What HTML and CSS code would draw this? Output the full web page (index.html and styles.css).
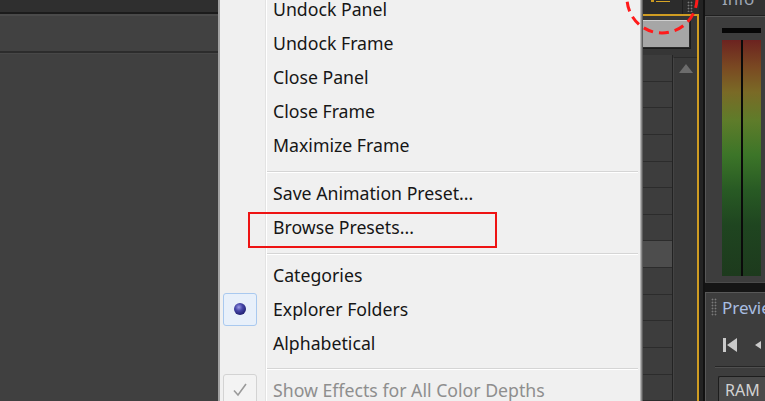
FILE: index.html
```html
<!DOCTYPE html>
<html>
<head>
<meta charset="utf-8">
<link rel="stylesheet" href="styles.css">
</head>
<body>
<div class="screen">
  <div class="left-panel">
    <div class="lp-top"></div>
    <div class="lp-bar"></div>
    <div class="lp-body"></div>
  </div>

  <div class="menu">
    <div class="menu-list">
      <div class="item"><span class="icon"></span><span class="label">Undock Panel</span></div>
      <div class="item"><span class="icon"></span><span class="label">Undock Frame</span></div>
      <div class="item"><span class="icon"></span><span class="label">Close Panel</span></div>
      <div class="item"><span class="icon"></span><span class="label">Close Frame</span></div>
      <div class="item"><span class="icon"></span><span class="label">Maximize Frame</span></div>
      <div class="sep"></div>
      <div class="item"><span class="icon"></span><span class="label">Save Animation Preset...</span></div>
      <div class="item"><span class="icon"></span><span class="label">Browse Presets...</span></div>
      <div class="sep"></div>
      <div class="item"><span class="icon"></span><span class="label">Categories</span></div>
      <div class="item"><span class="icon icon-radio"><span class="dot"></span></span><span class="label">Explorer Folders</span></div>
      <div class="item"><span class="icon"></span><span class="label">Alphabetical</span></div>
      <div class="sep sep-short"></div>
      <div class="item disabled"><span class="icon icon-check"><svg width="16" height="14" viewBox="0 0 16 14"><path d="M2 7.5 L6 12 L14 1" fill="none" stroke="#9a9a9a" stroke-width="1.6"/></svg></span><span class="label">Show Effects for All Color Depths</span></div>
    </div>
    <div class="annot-rect"></div>
  </div>

  <div class="right">
    <div class="col-a">
      <div class="a-head">
        <span class="tick"></span>
        <span class="burger"><i></i><i></i></span>
        <span class="a-div"></span>
        <span class="grip"></span>
      </div>
      <div class="a-body">
        <div class="a-btn"></div>
        <div class="a-grid">
          <div class="cells">
            <div class="cell"></div><div class="cell"></div><div class="cell"></div><div class="cell"></div>
            <div class="cell"></div><div class="cell"></div><div class="cell"></div><div class="cell hl"></div>
            <div class="cell"></div><div class="cell"></div><div class="cell"></div><div class="cell"></div>
            <div class="cell"></div><div class="cell"></div>
          </div>
          <div class="scroll"><div class="tri"></div></div>
        </div>
      </div>
    </div>
    <div class="col-sep"></div>
    <div class="col-b">
      <div class="b-head"><span class="tab">Info</span></div>
      <div class="info-panel">
        <div class="peak"></div>
        <div class="meter"><div class="ch"></div><div class="ch-div"></div><div class="ch"></div></div>
      </div>
      <div class="b-gap"></div>
      <div class="preview-panel">
        <div class="pv-head"><span class="grip grip-tall"></span><span class="pv-title">Preview</span></div>
        <div class="pv-controls">
          <span class="skip"><i class="bar"></i><i class="tri-left"></i></span>
          <span class="tri-left small"></span>
        </div>
        <div class="pv-line"></div>
        <div class="ram">RAM</div>
      </div>
    </div>
  </div>

  <svg class="annot-circle" width="90" height="90" viewBox="0 0 90 90">
    <circle cx="45" cy="45" r="35" fill="none" stroke="#ff1a1a" stroke-width="3" stroke-dasharray="10 6"/>
  </svg>
</div>
</body>
</html>
```

FILE: styles.css
```css
html, body {
  margin: 0;
  padding: 0;
}
body {
  width: 765px;
  height: 401px;
  overflow: hidden;
  background: #404040;
  font-family: "Noto Sans", "Open Sans", sans-serif;
}
.screen {
  position: relative;
  display: flex;
  width: 765px;
  height: 401px;
  overflow: hidden;
}

/* left dark panel */
.left-panel {
  width: 218px;
  flex: none;
  display: flex;
  flex-direction: column;
  background: #404040;
}
.lp-top {
  flex: none;
  height: 12px;
  background: #2f2f2f;
  border-bottom: 2px solid #1b1b1b;
}
.lp-bar {
  flex: none;
  height: 35px;
  background: #414141;
  border-top: 2px solid #4a4a4a;
  border-bottom: 2px solid #2c2c2c;
}
.lp-body {
  flex: 1;
  background: #404040;
  border-top: 1px solid #474747;
}

/* popup menu */
.menu {
  position: relative;
  z-index: 2;
  width: 420px;
  flex: none;
  height: 401px;
  overflow: hidden;
  background: #f0f0f0;
  border-left: 2px solid #a2a2a2;
  box-shadow: 1px 0 0 #b8b8b8, 2px 0 0 #8a8a8a, 3px 0 0 #5e5e5e;
}
.menu-list {
  margin-top: -8px;
  display: flex;
  flex-direction: column;
  background-image: linear-gradient(to right, transparent 45px, #e3e3e3 45px, #e3e3e3 46px, #ffffff 46px, #ffffff 47px, transparent 47px);
}
.item {
  flex: none;
  height: 34px;
  display: flex;
  align-items: center;
  padding-left: 3px;
  color: #161616;
  font-size: 17.7px;
  white-space: nowrap;
}
.item .icon {
  width: 34px;
  height: 33px;
  box-sizing: border-box;
  margin-right: 16px;
  display: flex;
  align-items: center;
  justify-content: center;
  flex: none;
}
.item.disabled {
  color: #8e8e8e;
}
.icon-radio {
  background: #e8f0fa;
  border: 1px solid #a9c9ef;
  border-radius: 3px;
}
.icon-radio .dot {
  width: 12px;
  height: 12px;
  border-radius: 50%;
  background: radial-gradient(circle at 40% 35%, #9a9ae6 0%, #4646a8 35%, #202070 75%, #15154f 100%);
}
.icon-check {
  border: 1px solid #d3d3d3;
  border-radius: 3px;
  background: #f3f3f3;
}
.sep {
  flex: none;
  height: 14px;
  box-sizing: border-box;
  display: flex;
  align-items: flex-end;
  padding: 0 2px 3px 47px;
}
.sep-short {
  height: 13px;
}
.sep::before {
  content: "";
  flex: 1;
  height: 1px;
  background: #d5d5d5;
  border-bottom: 1px solid #ffffff;
}
.annot-rect {
  position: absolute;
  left: 28px;
  top: 212px;
  width: 249px;
  height: 36px;
  box-sizing: border-box;
  border: 2px solid #ee1313;
}

/* right side */
.right {
  flex: 1;
  display: flex;
  height: 401px;
}
.col-a {
  width: 59px;
  flex: none;
  display: flex;
  flex-direction: column;
  background: #353535;
  overflow: hidden;
}
.a-head {
  flex: none;
  position: relative;
  height: 14px;
  background: #2c2c2c;
}
.a-head .tick {
  position: absolute;
  left: 11px;
  top: 0;
  width: 3px;
  height: 2px;
  background: #c9981e;
}
.a-head .burger {
  position: absolute;
  left: 16px;
  top: -3px;
  width: 14px;
  display: flex;
  flex-direction: column;
  gap: 2px;
}
.a-head .burger i {
  display: block;
  height: 1.5px;
  background: #d6a526;
}
.a-head .a-div {
  position: absolute;
  left: 42px;
  top: 0;
  width: 1px;
  height: 14px;
  background: #1e1e1e;
}
.grip {
  position: absolute;
  left: 47px;
  top: 1px;
  width: 6px;
  height: 11px;
  background-image: radial-gradient(circle, #7a7a7a 0.8px, transparent 1.1px);
  background-size: 3px 3px;
}
.a-body {
  flex: 1;
  min-height: 0;
  display: flex;
  flex-direction: column;
  border-top: 2px solid #cf9c22;
  border-right: 2px solid #cf9c22;
  background: #363636;
}
.a-btn {
  flex: none;
  margin-top: 4px;
  width: 50px;
  height: 28px;
  box-sizing: border-box;
  background: #a6a6a6;
  border: 1px solid #2a2a2a;
  border-top-color: #cfcfcf;
  border-left-color: #cfcfcf;
  box-shadow: 1px 1px 0 #1b1b1b;
}
.a-grid {
  margin-top: 7px;
  flex: 1;
  min-height: 0;
  display: flex;
  padding-left: 3px;
  overflow: hidden;
}
.cells {
  width: 29px;
  flex: none;
  display: flex;
  flex-direction: column;
  border-right: 1px solid #232323;
}
.cell {
  height: 26.65px;
  flex: none;
  box-sizing: border-box;
  background: #3d3d3d;
  border-bottom: 1px solid #2c2c2c;
}
.cell.hl {
  background: #4d4d4d;
}
.scroll {
  flex: 1;
  margin-top: 2px;
  background: #393939;
  border-top: 1px solid #2a2a2a;
  border-left: 1px solid #444;
}
.scroll .tri {
  margin: 6px auto 0;
  width: 0;
  height: 0;
  border-left: 7px solid transparent;
  border-right: 7px solid transparent;
  border-bottom: 9px solid #6c6c6c;
}
.col-sep {
  width: 6px;
  flex: none;
  background: linear-gradient(to right, #232323 0, #232323 4px, #121212 4px);
}
.col-b {
  flex: 1;
  display: flex;
  flex-direction: column;
  background: #3c3c3c;
  overflow: hidden;
}
.b-head {
  flex: none;
  height: 15px;
  background: #323232;
  border-bottom: 1px solid #1f1f1f;
  overflow: hidden;
}
.tab {
  display: block;
  margin: -11px 0 0 17px;
  font-size: 17px;
  line-height: 20px;
  color: #9ea6b4;
}
.info-panel {
  flex: none;
  height: 266px;
  box-sizing: border-box;
  background: #3d3d3d;
  border-top: 1px solid #575757;
  border-left: 1px solid #575757;
  padding: 11px 0 0 16px;
}
.peak {
  width: 39px;
  height: 5px;
  background: #070707;
}
.meter {
  margin-top: 7px;
  width: 39px;
  height: 236px;
  display: flex;
}
.meter .ch {
  flex: 1;
  background: linear-gradient(to bottom, #6c2320 0px, #7a4a22 28px, #7a6a26 52px, #5f7c2a 80px, #3c7528 115px, #285a24 150px, #1f4520 185px, #1d3a1d 236px);
}
.meter .ch-div {
  width: 2px;
  background: #0a0a0a;
}
.b-gap {
  flex: none;
  height: 10px;
  background: #151515;
  border-top: 1px solid #4b4b4b;
  box-sizing: border-box;
}
.preview-panel {
  flex: 1;
  background: #3d3d3d;
  border-top: 1px solid #585858;
  border-left: 1px solid #585858;
}
.pv-head {
  position: relative;
  height: 30px;
  display: flex;
  align-items: center;
}
.grip-tall {
  left: 5px;
  top: 5px;
  width: 6px;
  height: 18px;
}
.pv-title {
  margin-left: 16px;
  margin-top: -2px;
  font-size: 17px;
  color: #a9bee2;
  white-space: nowrap;
}
.pv-controls {
  height: 43px;
  display: flex;
  align-items: center;
  padding-left: 17px;
  gap: 18px;
}
.skip {
  display: flex;
  align-items: center;
  gap: 1px;
}
.skip .bar {
  display: block;
  width: 3px;
  height: 14px;
  background: #cacaca;
}
.tri-left {
  display: block;
  width: 0;
  height: 0;
  border-top: 7px solid transparent;
  border-bottom: 7px solid transparent;
  border-right: 10px solid #cacaca;
}
.tri-left.small {
  border-top-width: 4px;
  border-bottom-width: 4px;
  border-right-width: 6px;
}
.pv-line {
  margin-left: 9px;
  height: 1px;
  background: #262626;
  border-bottom: 1px solid #4f4f4f;
}
.ram {
  margin: 8px 0 0 12px;
  height: 28px;
  box-sizing: border-box;
  padding-left: 6px;
  background: #4a4a4a;
  border: 1px solid #1d1d1d;
  border-right: 0;
  border-radius: 2px 0 0 0;
  color: #d2d2d2;
  font-size: 16px;
  line-height: 26px;
}

.annot-circle {
  position: absolute;
  left: 617px;
  top: -47px;
  z-index: 5;
}
```
